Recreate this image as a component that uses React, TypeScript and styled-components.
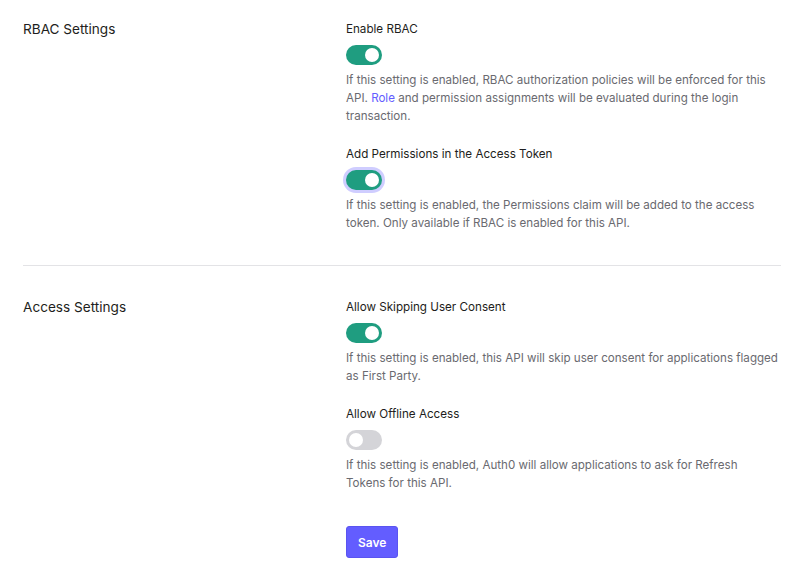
import React from "react";
import styled, { createGlobalStyle } from "styled-components";

const GlobalStyle = createGlobalStyle`
  html, body {
    margin: 0;
    padding: 0;
    background: #ffffff;
    font-family: Inter, "Noto Sans", Arial, sans-serif;
    -webkit-font-smoothing: antialiased;
  }
  * { box-sizing: border-box; }
`;

const Page = styled.div`
  padding: 0 19px 0 23px;
  width: 800px;
`;

const Section = styled.section<{ $top: number; $bottom: number; $divider?: boolean }>`
  display: grid;
  grid-template-columns: 323px 1fr;
  padding: ${(p) => p.$top}px 0 ${(p) => p.$bottom}px;
  border-bottom: ${(p) => (p.$divider ? "1px solid #e3e3e6" : "none")};
`;

const SectionTitle = styled.h2`
  margin: 0;
  font-size: 13.6px;
  line-height: 18px;
  font-weight: 400;
  color: #1e1e20;
`;

const Fields = styled.div`
  display: flex;
  flex-direction: column;
  gap: 20px;
`;

const Field = styled.div`
  display: flex;
  flex-direction: column;
`;

const Label = styled.div`
  font-size: 11.65px;
  line-height: 18px;
  color: #1e1e20;
  font-weight: 400;
`;

const Toggle = styled.span<{ $on: boolean; $focus?: boolean }>`
  position: relative;
  display: inline-block;
  width: 36px;
  height: 20px;
  margin: 7px 0 6px;
  border-radius: 10px;
  background: ${(p) => (p.$on ? "#1f9d80" : "#d4d4d8")};
  box-shadow: ${(p) => (p.$focus ? "0 0 0 3px #cfcdff" : "none")};
  &::after {
    content: "";
    position: absolute;
    top: 3px;
    left: ${(p) => (p.$on ? "19px" : "3px")};
    width: 14px;
    height: 14px;
    border-radius: 50%;
    background: #ffffff;
  }
`;

const Description = styled.p`
  margin: 0;
  max-width: 434px;
  font-size: 11.6px;
  line-height: 18px;
  color: #6a6a70;
`;

const Link = styled.a`
  color: #635dff;
  text-decoration: none;
`;

const SaveButton = styled.button`
  margin-top: 34px;
  align-self: flex-start;
  height: 32px;
  padding: 0 11px;
  border: 1px solid #5a54f0;
  border-radius: 3px;
  background: #635dff;
  color: #ffffff;
  font-family: Inter, Arial, sans-serif;
  font-size: 12px;
  font-weight: 600;
`;

export default function App() {
  return (
    <>
      <GlobalStyle />
      <Page>
        <Section $top={20} $bottom={33} $divider>
          <SectionTitle>RBAC Settings</SectionTitle>
          <Fields>
            <Field>
              <Label>Enable RBAC</Label>
              <Toggle $on />
              <Description>
                If this setting is enabled, RBAC authorization policies will be enforced for this
                API. <Link href="#">Role</Link> and permission assignments will be evaluated during
                the login transaction.
              </Description>
            </Field>
            <Field>
              <Label>Add Permissions in the Access Token</Label>
              <Toggle $on $focus />
              <Description>
                If this setting is enabled, the Permissions claim will be added to the access
                token. Only available if RBAC is enabled for this API.
              </Description>
            </Field>
          </Fields>
        </Section>
        <Section $top={32} $bottom={12}>
          <SectionTitle>Access Settings</SectionTitle>
          <Fields>
            <Field>
              <Label>Allow Skipping User Consent</Label>
              <Toggle $on />
              <Description>
                If this setting is enabled, this API will skip user consent for applications flagged
                as First Party.
              </Description>
            </Field>
            <Field>
              <Label>Allow Offline Access</Label>
              <Toggle $on={false} />
              <Description>
                If this setting is enabled, Auth0 will allow applications to ask for Refresh
                Tokens for this API.
              </Description>
              <SaveButton>Save</SaveButton>
            </Field>
          </Fields>
        </Section>
      </Page>
    </>
  );
}
